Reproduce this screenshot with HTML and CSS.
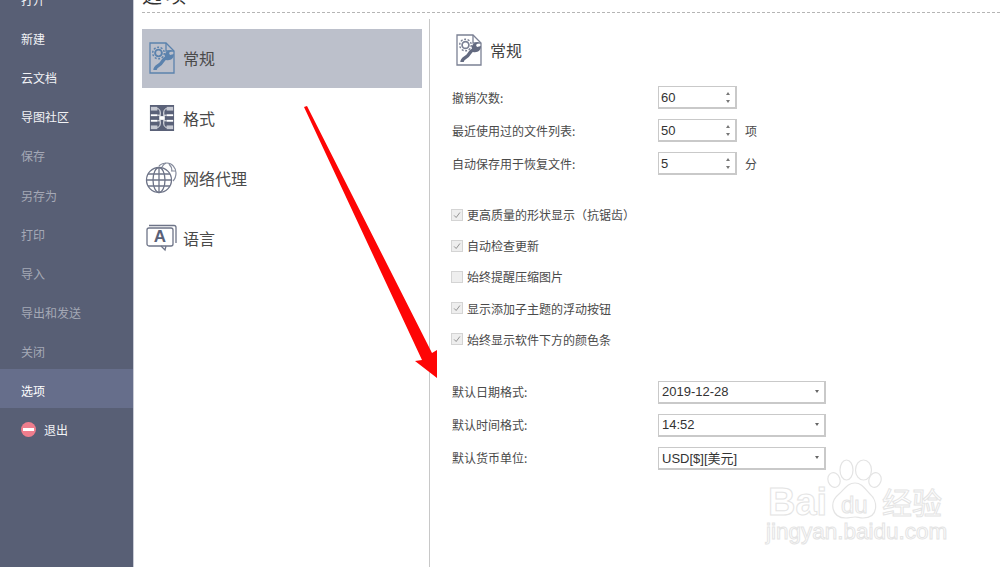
FILE: index.html
```html
<!DOCTYPE html>
<html lang="zh">
<head>
<meta charset="utf-8">
<title>选项</title>
<link rel="stylesheet" href="styles.css">
</head>
<body>
<div class="app">
  <aside class="side">
    <ul class="menu">
      <li class="mi">打开</li>
      <li class="mi">新建</li>
      <li class="mi">云文档</li>
      <li class="mi">导图社区</li>
      <li class="mi dim">保存</li>
      <li class="mi dim">另存为</li>
      <li class="mi dim">打印</li>
      <li class="mi dim">导入</li>
      <li class="mi dim">导出和发送</li>
      <li class="mi dim">关闭</li>
      <li class="mi sel">选项</li>
      <li class="mi exit"><span class="stop"><span class="stop-bar"></span></span>退出</li>
    </ul>
  </aside>
  <main class="main">
    <header class="head"><h1 class="title">选项</h1></header>
    <div class="body">
      <nav class="tabs">
        <div class="tab on">
          <svg class="ti" viewBox="0 0 26 32"><g fill="none" stroke="#5b82ad"><path d="M1 1h16l8 8v22H1z" stroke-width="1.300"/><path d="M17 1v8h8" stroke-width="1.300"/><circle cx="9.500" cy="11" r="3.400" stroke-width="1.900"/><circle cx="9.500" cy="11" r="5.800" stroke-width="1.500" stroke-dasharray="2 1.600"/><path d="M6 28c0-4 5-4 7-8 1-2 3-4 6-5" stroke-width="3.400"/></g><path d="M16 15c-1-4 2-7 7-7l-3 3 1 2 4-1c0 4-3 7-8 6z" fill="#5b82ad"/></svg>
          <span>常规</span>
        </div>
        <div class="tab">
          <svg class="ti" viewBox="0 0 28 30"><rect width="26" height="28" x="1" y="1" fill="#5a6178"/><g fill="#fff"><rect x="2" y="3" width="7" height="4" fill="#c6c9d2"/><rect x="19" y="3" width="7" height="4" fill="#c6c9d2"/><rect x="2" y="11" width="7" height="2"/><rect x="19" y="11" width="7" height="2"/><rect x="2" y="17" width="7" height="2"/><rect x="19" y="17" width="7" height="2"/><rect x="2" y="23" width="7" height="4" fill="#c6c9d2"/><rect x="19" y="23" width="7" height="4" fill="#c6c9d2"/><rect x="11" y="13" width="6" height="4"/></g><path d="M9 5c4 0 3 6 3 8M19 5c-4 0-3 6-3 8M9 25c4 0 3-6 3-8M19 25c-4 0-3-6-3-8M9 12h3M16 12h3M9 18h3M16 18h3" stroke="#fff" fill="none"/></svg>
          <span>格式</span>
        </div>
        <div class="tab">
          <svg class="ti wide globe" viewBox="0 0 32 32"><g fill="none" stroke="#858b9c" stroke-width="1.200"><path d="M14 4c2-2 5-3 8-3 5 0 9 5 9 10 0 3-1 6-3 8"/><path d="M21 1c-2 1-3 2-4 4M24 2c2 2 3 4 3 7M31 9h-5"/></g><g fill="none" stroke="#6e7488" stroke-width="1.300"><circle cx="14" cy="18" r="12.500"/><ellipse cx="14" cy="18" rx="6" ry="12.500"/><path d="M14 5.500v25M1.500 18h25M3 12h22M3 24h22"/></g></svg>
          <span>网络代理</span>
        </div>
        <div class="tab">
          <svg class="ti wide" viewBox="0 0 32 28"><g fill="none" stroke="#6e7488" stroke-width="1.300"><path d="M3 1.500h25a2 2 0 0 1 2 2V19"/><rect x="1" y="4" width="26" height="18" rx="2"/><path d="M15 22l4 4 1-4"/></g><text x="14" y="18" text-anchor="middle" class="ti-a">A</text></svg>
          <span>语言</span>
        </div>
      </nav>
      <section class="panel">
        <div class="panel-head">
          <svg class="ph-ic" viewBox="0 0 26 32"><g fill="none" stroke="#7b8194"><path d="M1 1h16l8 8v22H1z" stroke-width="1.300"/><path d="M17 1v8h8" stroke-width="1.300"/><circle cx="9.500" cy="11" r="3.400" stroke-width="1.700"/><circle cx="9.500" cy="11" r="5.800" stroke-width="1.400" stroke-dasharray="2 1.600"/></g><path d="M6 28c0-4 5-4 7-8 1-2 3-4 6-5" fill="none" stroke="#636a80" stroke-width="3.400"/><path d="M16 15c-1-4 2-7 7-7l-3 3 1 2 4-1c0 4-3 7-8 6z" fill="#636a80"/></svg>
          <span class="ph-t">常规</span>
        </div>
        <div class="rows">
          <div class="row"><label class="lb">撤销次数:</label><div class="spin"><span>60</span><span class="ar"><i class="up"></i><i class="dn"></i></span></div></div>
          <div class="row"><label class="lb">最近使用过的文件列表:</label><div class="spin"><span>50</span><span class="ar"><i class="up"></i><i class="dn"></i></span></div><span class="unit">项</span></div>
          <div class="row"><label class="lb">自动保存用于恢复文件:</label><div class="spin"><span>5</span><span class="ar"><i class="up"></i><i class="dn"></i></span></div><span class="unit">分</span></div>
        </div>
        <div class="checks">
          <div class="ck"><span class="box"><svg viewBox="0 0 12 12"><path d="M2.500 6.500l2.500 2.500 4.500-6" fill="none" stroke="#8a8a8a" stroke-width="1.100"/></svg></span>更高质量的形状显示（抗锯齿）</div>
          <div class="ck"><span class="box"><svg viewBox="0 0 12 12"><path d="M2.500 6.500l2.500 2.500 4.500-6" fill="none" stroke="#8a8a8a" stroke-width="1.100"/></svg></span>自动检查更新</div>
          <div class="ck"><span class="box"></span>始终提醒压缩图片</div>
          <div class="ck"><span class="box"><svg viewBox="0 0 12 12"><path d="M2.500 6.500l2.500 2.500 4.500-6" fill="none" stroke="#8a8a8a" stroke-width="1.100"/></svg></span>显示添加子主题的浮动按钮</div>
          <div class="ck"><span class="box"><svg viewBox="0 0 12 12"><path d="M2.500 6.500l2.500 2.500 4.500-6" fill="none" stroke="#8a8a8a" stroke-width="1.100"/></svg></span>始终显示软件下方的颜色条</div>
        </div>
        <div class="rows sel-rows">
          <div class="row"><label class="lb">默认日期格式:</label><div class="drop"><span>2019-12-28</span><i class="dn dk"></i></div></div>
          <div class="row"><label class="lb">默认时间格式:</label><div class="drop"><span>14:52</span><i class="dn dk"></i></div></div>
          <div class="row"><label class="lb">默认货币单位:</label><div class="drop"><span>USD[$][美元]</span><i class="dn dk"></i></div></div>
        </div>
      </section>
    </div>
  </main>
</div>
<svg class="arrow" viewBox="0 0 1000 567"><path d="M304 107L307 106L432 353L437 350L437 378L415 361L422 360z" fill="#fe0505"/></svg>
<div class="wm">
  <svg class="paw" viewBox="0 0 56 62"><g fill="#fff" stroke="#e4e4e4" stroke-width="1.200"><ellipse cx="20.500" cy="12" rx="6.500" ry="10"/><ellipse cx="37.500" cy="12" rx="8" ry="10"/><ellipse cx="8" cy="22" rx="6" ry="7.500" transform="rotate(-20 8 22)"/><ellipse cx="49" cy="22" rx="6" ry="7.500" transform="rotate(20 49 22)"/><path d="M29 25c7 0 10 6 15 11 8 7 9 24-7 24-4 0-5-1-8-1s-6 1-9 1C5 60 3 44 13 36c6-5 8-11 16-11z"/></g></svg>
  <span class="wm-bai">Bai</span><span class="wm-du">du</span><span class="wm-jy">经验</span>
  <span class="wm-url">jingyan.baidu.com</span>
</div>
</body>
</html>
```
FILE: styles.css
```css
*{box-sizing:border-box}
html,body{margin:0;height:100%;overflow:hidden;background:#fff}
body{font-family:"Noto Sans CJK SC","Liberation Sans",sans-serif;color:#333;position:relative}
.app{display:flex;height:567px;overflow:hidden}
.side{width:134px;flex:none;background:#585f75;border-right:1px solid #c9ccd6;overflow:hidden}
.menu{list-style:none;margin:-20px 0 0;padding:0}
.mi{height:39.100px;padding-left:21px;display:flex;align-items:center;font-size:12px;color:#f2f3f6}
.mi.dim{color:#a5a9b6}
.mi.sel{background:#666e8b;color:#fff;height:39px;margin:-2px 0 2px;padding-top:5px}
.mi.exit{gap:8px}
.stop{width:15px;height:15px;border-radius:50%;background:#ee7d8d;display:flex;align-items:center;justify-content:center}
.stop-bar{width:11px;height:3px;background:#fff}
.main{flex:1;min-width:0;display:flex;flex-direction:column;padding-left:8px}
.head{height:13px;border-bottom:1px dashed #b5b5b5;position:relative;overflow:hidden;flex:none}
.title{position:absolute;left:0;bottom:7px;margin:0;font-size:20px;line-height:20px;font-weight:400;color:#333;letter-spacing:4px}
.body{flex:1;display:flex;padding-top:6px;min-height:0}
.tabs{width:287px;flex:none;padding-top:10px;display:flex;flex-direction:column}
.tab{width:280px;height:59px;margin-bottom:1px;padding:0 0 1px 7px;display:flex;align-items:center;gap:8px;font-size:16px;color:#4a4a4a;flex:none}
.tab.on{background:#bcc0cb}
.ti{width:26px;height:32px;flex:none}
.ti.wide{width:32px;margin-left:-3px;margin-right:-3px}
.ti.globe{margin-left:-4px;margin-right:-2px}
.ti-a{font:700 17px "Liberation Sans",sans-serif;fill:#5a6178}
.panel{flex:1;border-left:1px solid #c8c8c8;padding:15px 0 0 22px}
.panel-head{display:flex;align-items:center;height:32px;padding-left:4px;gap:8px;margin-bottom:20px}
.ph-ic{width:26px;height:32px;flex:none}
.ph-t{font-size:16px;color:#444}
.rows{display:flex;flex-direction:column;gap:10px}
.row{display:flex;align-items:center;height:23px;font-size:12px;color:#4a4a4a}
.lb{width:206px;flex:none}
.spin{width:79px;height:23px;border:1px solid #c9c9c9;border-width:1px 2px 2px 1px;display:flex;align-items:center;justify-content:space-between;padding:0 5px 0 2px;font:13px "Liberation Sans",sans-serif;color:#333}
.ar{display:flex;flex-direction:column;gap:5px}
i.up,i.dn{display:block;width:0;height:0;border-left:2.500px solid transparent;border-right:2.500px solid transparent}
i.up{border-bottom:3px solid #777}
i.dn{border-top:3px solid #777}
.unit{margin-left:8px}
.checks{display:flex;flex-direction:column;margin-top:24px}
.ck{height:31.200px;display:flex;align-items:center;gap:4px;font-size:12px;color:#4a4a4a;margin-left:-1px}
.box{width:12px;height:12px;background:#eee;border:1px solid #d4d4d4;flex:none;display:block}
.box svg{display:block;width:10px;height:10px}
.sel-rows{margin-top:25px}
.drop{width:168px;height:23px;margin-top:2px;border:1px solid #c9c9c9;border-width:1px 2px 2px 1px;display:flex;align-items:center;justify-content:space-between;padding:0 5px 0 3px;font-size:13px;font-family:"Liberation Sans","Noto Sans CJK SC",sans-serif;color:#333}
i.dk{border-top-color:#666}
.arrow{position:absolute;left:0;top:0;width:1000px;height:567px;pointer-events:none}
.wm{position:absolute;left:766px;top:458px;width:220px;height:100px;font-family:"Liberation Sans",sans-serif}
.paw{position:absolute;left:60px;top:0;width:56px;height:62px}
.wm span{position:absolute;color:#fff;-webkit-text-stroke:1px #e4e4e4}
.wm-bai{left:2px;top:24px;font-size:38px;line-height:40px;font-weight:700}
.wm-du{left:75px;top:35px;font-size:24px;line-height:24px}
.wm-jy{left:116px;top:28px;font-size:30px;line-height:30px;font-family:"Noto Sans CJK SC",sans-serif}
.wm-url{left:0;top:62px;font-size:22.500px;line-height:24px;white-space:nowrap}
```
